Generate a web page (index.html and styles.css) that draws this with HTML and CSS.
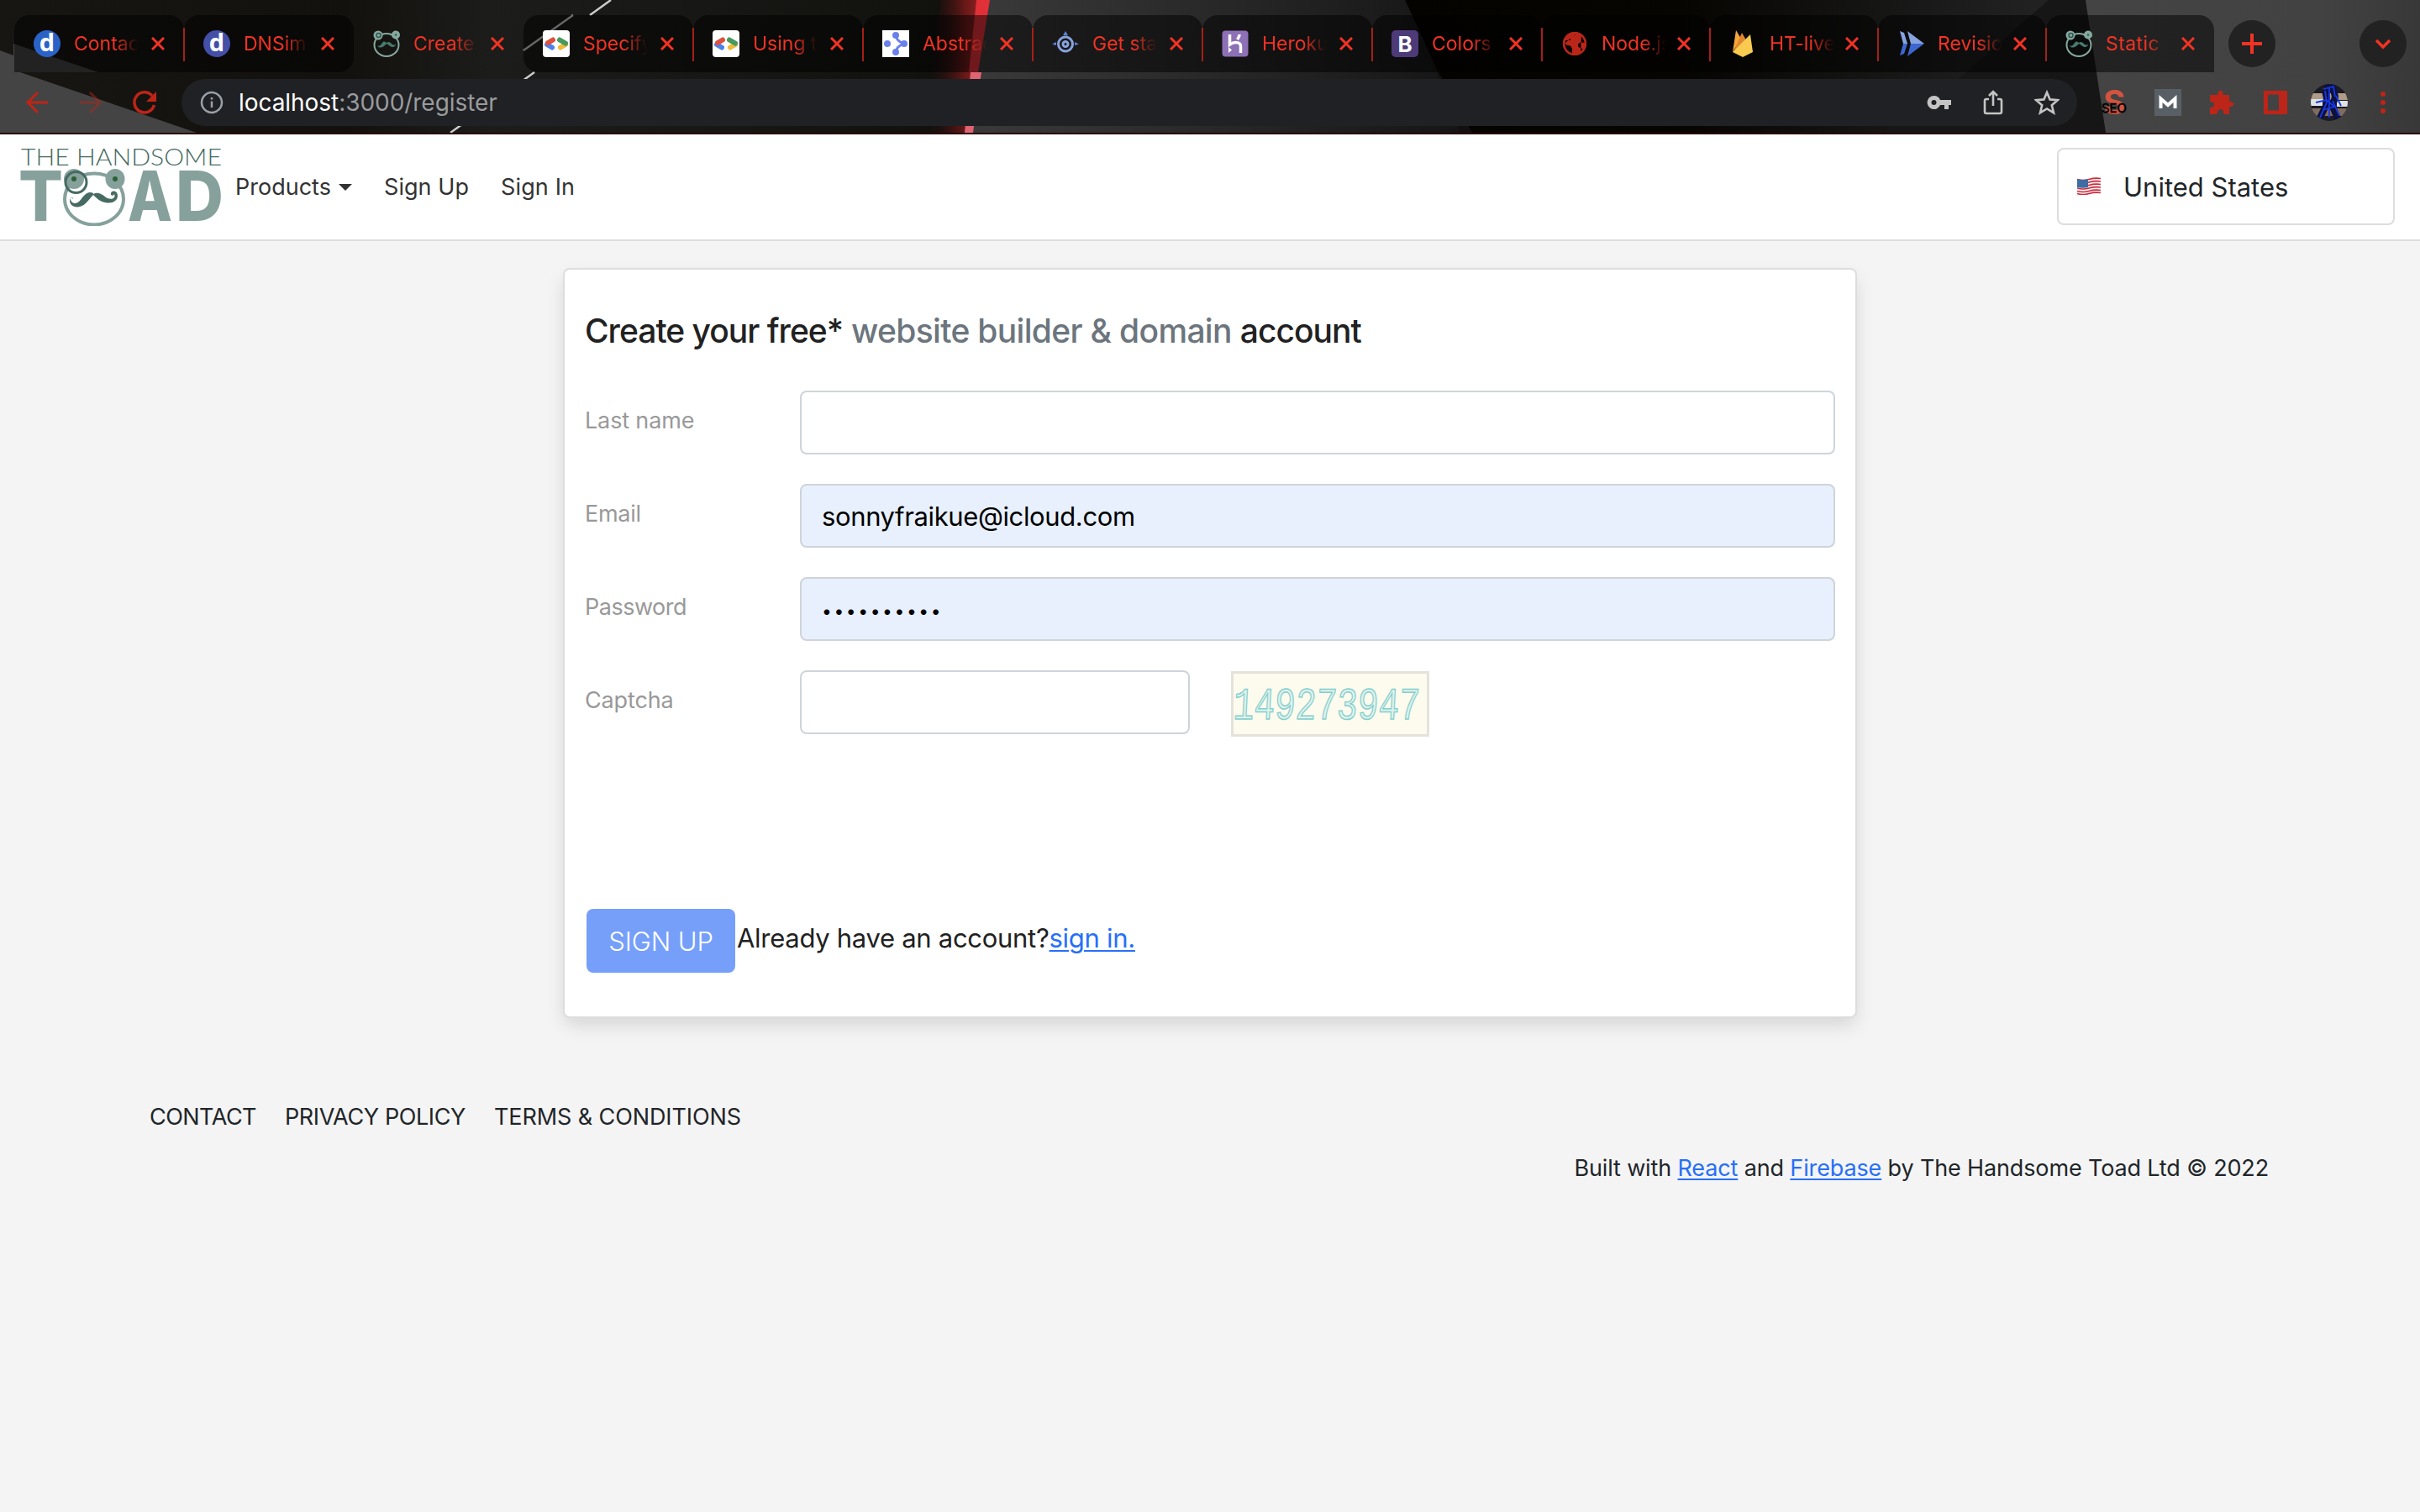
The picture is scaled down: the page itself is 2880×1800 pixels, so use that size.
FILE: index.html
```html
<!DOCTYPE html>
<html lang="en">
<head>
<meta charset="utf-8">
<title>Create account</title>
<link rel="stylesheet" href="styles.css">
</head>
<body>
<svg class="defs" width="0" height="0" aria-hidden="true">
  <defs>
    <symbol id="toad" viewBox="0 0 76 68">
      <ellipse cx="38" cy="36" rx="35" ry="30.5" fill="none" stroke="#86a19b" stroke-width="4"/>
      <ellipse cx="14" cy="12" rx="12" ry="12" fill="#86a19b"/>
      <ellipse cx="63" cy="12" rx="11.5" ry="12" fill="#86a19b"/>
      <circle cx="16.500" cy="16" r="12.500" fill="none" stroke="#466b62" stroke-width="3"/>
      <circle cx="14" cy="12" r="3" fill="#2c6138"/><circle cx="63" cy="12" r="3" fill="#2c6138"/>
      <path d="M37 29C30 25 25 33 21 38c-4 4-9 4-11-1-1-3 3-4 3-1C10 32 7 38 11 43c4 4 12 3 17-2 4-4 7-8 9-10 4 4 8 8 14 9 9 2 15-2 15-8 0-6-7-7-8-3-1 3 3 4 4 1 2 5-3 7-8 5-5-3-10-9-17-5z" fill="#466b62"/>
    </symbol>
    <symbol id="face" viewBox="0 0 32 32">
      <ellipse cx="16" cy="17.500" rx="14.500" ry="13.500" fill="none" stroke="#86a89f" stroke-width="2"/>
      <circle cx="6" cy="6" r="5.500" fill="#86a89f"/><circle cx="27" cy="5.500" r="5" fill="#86a89f"/>
      <circle cx="6.500" cy="6" r="2.500" fill="none" stroke="#2f574e" stroke-width="1.500"/><circle cx="27" cy="5.500" r="1.200" fill="#2f574e"/>
      <path d="M5 18c2 2 4 0 6-3s4-1 5 0c2-2 4-1 6 1s4 2 5 0c0 5-5 5-8 2l-3-2c-3 4-9 7-11 2z" fill="#477a6e"/>
    </symbol>
    <symbol id="x" viewBox="0 0 16 16"><path d="M1 1l14 14M15 1L1 15" stroke="#f23324" stroke-width="3"/></symbol>
    <symbol id="gdev" viewBox="0 0 32 32"><rect width="32" height="32" rx="4" fill="#fff"/><g stroke-width="6" stroke-linecap="round"><path d="M5 17l6 3.500" stroke="#4a80ed"/><path d="M6 15l6-3.500" stroke="#dc5040"/><path d="M27 17l-6 3.500" stroke="#f2b93a"/><path d="M20 11.500l7 4" stroke="#459a5c"/></g></symbol>
  </defs>
</svg>

<header class="browser">
  <svg class="theme" viewBox="0 0 2880 158" preserveAspectRatio="none" aria-hidden="true">
    <defs>
      <linearGradient id="g1"><stop offset="0" stop-color="#3a3a3a"/><stop offset=".5" stop-color="#282828"/><stop offset="1" stop-color="#151515"/></linearGradient>
      <linearGradient id="g2"><stop offset="0" stop-color="#0f0e0a" stop-opacity="0"/><stop offset=".75" stop-color="#6a1818"/><stop offset="1" stop-color="#8a2020"/></linearGradient>
      <linearGradient id="g3"><stop offset="0" stop-color="#040300"/><stop offset=".4" stop-color="#060502"/><stop offset=".8" stop-color="#1c1c1c"/><stop offset="1" stop-color="#262626"/></linearGradient>
      <linearGradient id="g4"><stop offset="0" stop-color="#444"/><stop offset=".7" stop-color="#424242"/><stop offset="1" stop-color="#383838"/></linearGradient>
      <linearGradient id="g5"><stop offset="0" stop-color="#171612"/><stop offset=".35" stop-color="#12110e"/><stop offset=".5" stop-color="#1c1c1a"/><stop offset="1" stop-color="#10100d"/></linearGradient>
    </defs>
    <rect width="1170" height="158" fill="url(#g5)"/>
    <path d="M0 60L16 66V52L117 86H24L234 158H0z" fill="#444"/>
    <path d="M1170 0H1676L1738 158H1153z" fill="url(#g1)"/>
    <path d="M1672 0H2500V158H1752L1712 86z" fill="url(#g3)"/>
    <path d="M2438 0H2482L2506 158H2250L2340 86z" fill="#161616"/>
    <path d="M2482 0H2880V158H2506z" fill="url(#g4)"/>
    <path d="M1120 0H1165L1152 158H1100z" fill="url(#g2)"/>
    <path d="M1162 0H1178L1164 86H1153z" fill="#e03038"/>
    <path d="M1155 86H1168L1158 158H1148z" fill="#e06472"/>
    <path d="M727 0L702 18M682 18L623 60M636 86L536 158" stroke="#ccc" stroke-width="2.500" fill="none"/>
  </svg>
  <div class="tabs">
    <div class="tab"><svg class="fav" viewBox="0 0 32 32"><circle cx="16" cy="16" r="16" fill="#2a62c8"/><text x="16" y="25" class="dn">d</text></svg><span class="tt">Contact</span><svg class="x"><use href="#x"/></svg></div>
    <div class="tab nosep"><svg class="fav" viewBox="0 0 32 32"><circle cx="16" cy="16" r="16" fill="#444fa8"/><text x="16" y="25" class="dn">d</text></svg><span class="tt">DNSimple</span><svg class="x"><use href="#x"/></svg></div>
    <div class="tab on nosep"><svg class="fav"><use href="#face"/></svg><span class="tt">Create</span><svg class="x"><use href="#x"/></svg></div>
    <div class="tab"><svg class="fav"><use href="#gdev"/></svg><span class="tt">Specify</span><svg class="x"><use href="#x"/></svg></div>
    <div class="tab"><svg class="fav"><use href="#gdev"/></svg><span class="tt">Using t</span><svg class="x"><use href="#x"/></svg></div>
    <div class="tab"><svg class="fav" viewBox="0 0 32 32"><path fill="#fff" d="M0 0h32v32H0z"/><g fill="#6b80ea"><circle cx="6" cy="16" r="4"/><circle cx="16" cy="6" r="4"/><circle cx="16" cy="26" r="4"/><circle cx="26" cy="16" r="4"/></g><path d="M16 6c1 5 3 7 9 10-6 3-8 5-9 10" stroke="#6b80ea" stroke-width="3" fill="none"/></svg><span class="tt">Abstract</span><svg class="x"><use href="#x"/></svg></div>
    <div class="tab"><svg class="fav" viewBox="0 0 32 32"><g fill="none" stroke="#87a3dd"><circle cx="16" cy="16.500" r="8.500" stroke-width="3"/><circle cx="16" cy="16.500" r="3" stroke-width="3"/></g><path d="M16 1l3 5h-6zM0 16.500l5-2.500v4zM32 16.500l-5-2.500v4z" fill="#5c83d8"/></svg><span class="tt">Get started</span><svg class="x"><use href="#x"/></svg></div>
    <div class="tab"><svg class="fav" viewBox="0 0 32 32"><rect x=".5" y=".5" width="31" height="31" rx="4" fill="#8d70b5"/><path d="M9.500 5v12c4-3 13-4 13 2v8M21 5c0 3-1 4-2.500 6" stroke="#fff" stroke-width="3.500" fill="none"/><path d="M8 20l4 3.500L8 27z" fill="#fff"/></svg><span class="tt">Heroku</span><svg class="x"><use href="#x"/></svg></div>
    <div class="tab"><svg class="fav" viewBox="0 0 32 32"><rect width="32" height="32" rx="5" fill="#4d3a78"/><text x="16" y="25.500" class="bs">B</text></svg><span class="tt">Colors</span><svg class="x"><use href="#x"/></svg></div>
    <div class="tab n"><svg class="fav" viewBox="0 0 32 32"><circle cx="16" cy="16" r="14" fill="#bb2619"/><path d="M17 4c-1 4-7 3-6 8H5c-1 4 1 6 4 6 3 0 3 3 4 4v7C7 27 4 22 4 16M24 5c3 3 4 7 4 10-4-1-8-1-8 3s4 2 5 4-1 4-2 5" fill="#080505"/><path d="M6 10c4-2 7 1 9-3l2-4C11 3 7 6 6 10z" fill="#bb2619"/><circle cx="16" cy="16" r="12.800" fill="none" stroke="#bb2619" stroke-width="2.500"/></svg><span class="tt">Node.js</span><svg class="x"><use href="#x"/></svg></div>
    <div class="tab n"><svg class="fav" viewBox="0 0 32 32"><path d="M4 26L8 0l6 10z" fill="#f3a73b"/><path d="M5 26L15 3l7 12z" fill="#e1862f"/><path d="M4 26L25 5l3 21-12 6z" fill="#f8ca4f"/></svg><span class="tt">HT-live</span><svg class="x"><use href="#x"/></svg></div>
    <div class="tab n"><svg class="fav" viewBox="0 0 32 32"><path d="M3 1l5 2 4 13H7zM12 1l20 15H16z" fill="#87a3e0"/><path d="M7 16h5L8 28l-5 2zM16 16h16L12 31z" fill="#3d66cf"/></svg><span class="tt">Revisions</span><svg class="x"><use href="#x"/></svg></div>
    <div class="tab n nosep"><svg class="fav"><use href="#face"/></svg><span class="tt wide">Static</span><svg class="x"><use href="#x"/></svg></div>
    <svg class="round plus" viewBox="0 0 56 56"><circle cx="28" cy="28" r="28" fill="#222"/><path d="M16 28h24M28 16v24" stroke="#f23324" stroke-width="4"/></svg>
    <svg class="round down" viewBox="0 0 56 56"><circle cx="28" cy="28" r="28" fill="#222"/><path d="M20 24l8 8 8-8" stroke="#f23324" stroke-width="3.500" fill="none"/></svg>
  </div>
  <div class="toolbar">
    <svg class="nav" viewBox="0 0 32 32"><path d="M29 16H5M17 4L5 16l12 12" stroke="#bd2518" stroke-width="3" fill="none"/></svg>
    <svg class="nav dim" viewBox="0 0 32 32"><path d="M3 16h24M15 4l12 12-12 12" stroke="#bd2518" stroke-width="3" fill="none"/></svg>
    <svg class="nav" viewBox="0 0 32 32"><path d="M25 8A12 12 0 1 0 27.500 19" stroke="#bd2518" stroke-width="3.500" fill="none"/><path d="M30 3v12H18z" fill="#bd2518"/></svg>
    <div class="omni">
      <svg class="info" viewBox="0 0 28 28"><circle cx="14" cy="14" r="12" fill="none" stroke="#9aa0a6" stroke-width="2.500"/><path d="M14 12.500V20M14 8v2.500" stroke="#9aa0a6" stroke-width="2.500"/></svg>
      <span class="url">localhost<span class="rest">:3000/register</span></span>
      <svg class="oi key" viewBox="0 0 30 30"><path d="M8.500 7a8 8 0 1 0 7.500 11h5v5h5v-5h3v-6H16A8 8 0 0 0 8.500 7zm0 5a3 3 0 1 1 0 6 3 3 0 0 1 0-6z" fill="#c4c4c4"/></svg>
      <svg class="oi" viewBox="0 0 30 30"><path d="M10 11H7a2 2 0 0 0-2 2v13a2 2 0 0 0 2 2h16a2 2 0 0 0 2-2V13a2 2 0 0 0-2-2h-3M15 19V2M10 7l5-5 5 5" fill="none" stroke="#c4c4c4" stroke-width="2.600"/></svg>
      <svg class="oi" viewBox="0 0 30 30"><path d="M15 3l3.600 8.400 9.200.8-7 6 2.200 9L15 22.400 7 27.200l2.200-9-7-6 9.200-.8z" fill="none" stroke="#c4c4c4" stroke-width="2.600"/></svg>
    </div>
    <div class="ext">
      <svg class="seo-i" viewBox="0 0 32 32"><text x="16" y="30" class="seo-s">S</text><text x="16" y="28" class="seo">SEO</text></svg>
      <svg viewBox="0 0 32 32"><path fill="#596065" d="M0 0h32v32H0z"/><path d="M7.500 23V11.500L16 19l8.500-7.500V23" fill="none" stroke="#fff" stroke-width="4"/></svg>
      <svg viewBox="0 0 32 32"><path d="M4 7h7.500C10.500 0 18.500 0 17.500 7H25v8c7-1 7 7 0 6v9h-6.500c0-8-8-8-8 0H2v-8c7 0 7-7 0-7V7z" fill="#bd2518"/></svg>
      <svg viewBox="0 0 32 32"><path d="M2 2h28v28H2zM7 6.500v19h13v-19z" fill="#bd2518" fill-rule="evenodd"/></svg>
      <svg class="avatar" viewBox="0 0 44 44"><clipPath id="c"><circle cx="22" cy="22" r="22"/></clipPath><g clip-path="url(#c)"><path fill="#1c1a24" d="M0 0h44v44H0z"/><path fill="#b09c86" d="M0 11h44v8H0z"/><path fill="#dfe3e3" d="M0 18h14v8H0zM31 20h13v7H31z"/><path fill="#7f6c5e" d="M0 29h44v9H0z"/><path d="M17 5l9-2 3 12-3 12 6 14M17 8l3 14-9 18" stroke="#0b1240" stroke-width="8" fill="none"/><path d="M15 6l12-3 2 12M17 8l2 14-8 18M22 4v36M26 20l8 18M6 22l13-3 9 8-14 4M30 14l6 12" stroke="#1838e8" stroke-width="1.800" fill="none"/></g></svg>
      <svg class="dots" viewBox="0 0 6 26"><g fill="#bd2518"><circle cx="3" cy="3" r="3"/><circle cx="3" cy="13" r="3"/><circle cx="3" cy="23" r="3"/></g></svg>
    </div>
  </div>
</header>

<nav class="navbar">
  <svg class="logo" viewBox="0 0 240 92">
    <text x="1" y="20.500" class="lt" textLength="239" lengthAdjust="spacingAndGlyphs">THE HANDSOME</text>
    <text x="-2" y="87" class="lb" textLength="53" lengthAdjust="spacingAndGlyphs">T</text>
    <use href="#toad" x="50" y="25" width="76" height="68"/>
    <text x="128" y="87" class="lb" textLength="53" lengthAdjust="spacingAndGlyphs">A</text>
    <text x="185" y="87" class="lb" textLength="57" lengthAdjust="spacingAndGlyphs">D</text>
  </svg>
  <a class="nl n1">Products<span class="caret"></span></a>
  <a class="nl n2">Sign Up</a>
  <a class="nl n3">Sign In</a>
  <div class="country">
    <svg class="flag" viewBox="0 0 28 21"><path d="M0 2q7 2 14 0t14-1v18q-7-1-14 1t-14 0z" fill="#f2f2f2"/><path d="M0 2.500q7 2 14 0t14-1M0 6q7 2 14 0t14-1M0 9.500q7 2 14 0t14-1M0 13q7 2 14 0t14-1M0 16.500q7 2 14 0t14-1M0 19.500q7 2 14 0t14-1" stroke="#cf2b3c" stroke-width="1.600" fill="none"/><path d="M0 2q7 2 13 0v10q-6 1.500-13 0z" fill="#3f6ca3"/></svg>
    <span>United States</span>
  </div>
</nav>

<main class="page">
  <form class="card">
    <h1><span>Create your free*</span><span class="muted">website builder &amp; domain</span><span>account</span></h1>
    <div class="row"><label>Last name</label><input type="text"></div>
    <div class="row"><label class="l-email">Email</label><input class="auto" type="text" value="sonnyfraikue@icloud.com"></div>
    <div class="row"><label class="l-pass">Password</label><input class="auto pw" type="text" value="••••••••••"></div>
    <div class="row"><label>Captcha</label><input class="short" type="text">
      <svg class="captcha" viewBox="0 0 236 78"><rect x="1.500" y="1.500" width="233" height="75" fill="#fdfaee" stroke="#e4e2da" stroke-width="3"/><text x="5" y="57" textLength="222" lengthAdjust="spacingAndGlyphs" transform="skewX(-3)">149273947</text></svg>
    </div>
    <div class="actions"><button type="button">SIGN UP</button><p class="have">Already have an account?<a>sign in.</a></p></div>
  </form>
</main>

<footer>
  <div class="links"><a class="f1">CONTACT</a><a class="f2">PRIVACY POLICY</a><a class="f3">TERMS &amp; CONDITIONS</a></div>
  <p class="built">Built with <a>React</a> and <a>Firebase</a> by The Handsome Toad Ltd © 2022</p>
</footer>
</body>
</html>
```
FILE: styles.css
```css
* { box-sizing: border-box; }
body { margin: 0; width: 2880px; height: 1800px; overflow: hidden; background: #f4f4f4; color: #212529; font-family: Inter, "Liberation Sans", sans-serif; }
svg { display: block; flex: none; }
.defs { position: absolute; }

.browser { position: relative; height: 160px; border-bottom: 2px solid #2a0003; background: #12110f; }
.theme { position: absolute; inset: 0; width: 2880px; height: 158px; }
.tabs { position: relative; display: flex; align-items: center; height: 86px; padding: 18px 16px 0 17px; }
.tab { position: relative; display: flex; align-items: center; width: 202px; height: 68px; padding-left: 23px; border-radius: 18px 18px 0 0; background: rgba(0,0,0,.5); flex: none; }
.tab.n { width: 200px; }
.tab.on { background: none; }
.tab:not(.nosep)::after { content: ""; position: absolute; right: -1px; top: 15px; width: 2px; height: 40px; background: #a52015; z-index: 1; }
.tab:nth-child(2) { border-bottom-right-radius: 18px; }
.tab:nth-child(4) { border-bottom-left-radius: 18px; }
.fav { width: 32px; height: 32px; }
.tt { width: 78px; margin-left: 16px; overflow: hidden; white-space: nowrap; font-size: 23px; line-height: 32px; color: #f23324; -webkit-mask-image: linear-gradient(90deg, #000 62%, transparent 98%); mask-image: linear-gradient(90deg, #000 62%, transparent 98%); }
.tt.wide { letter-spacing: .4px; }
.x { width: 16px; height: 16px; margin: 0 23px 0 auto; }
.round { width: 56px; height: 56px; margin-top: -1px; }
.plus { margin-left: 17px; }
.down { margin-left: auto; }
.dn { font: bold 29px "Open Sans", sans-serif; fill: #fff; text-anchor: middle; }
.bs { font: bold 26px Inter, sans-serif; fill: #fff; text-anchor: middle; }

.toolbar { position: relative; display: flex; align-items: center; height: 72px; padding-left: 28px; }
.nav { width: 32px; height: 32px; margin-right: 32px; }
.nav.dim { opacity: .45; }
.nav:nth-child(3) { margin-right: 28px; }
.omni { display: flex; align-items: center; width: 2256px; height: 56px; padding: 0 21px 0 22px; border-radius: 28px; background: #202124; }
.info { width: 28px; height: 28px; margin-right: 18px; }
.url { margin-right: auto; font-size: 28px; letter-spacing: -.05px; color: #fff; }
.rest { color: #9a9b9d; }
.oi { width: 30px; height: 30px; margin-left: 34px; }
.ext { display: flex; align-items: center; margin-left: 28px; }
.ext svg { width: 32px; height: 32px; margin-right: 32px; }
.ext svg.avatar { width: 44px; height: 44px; margin: 0 39px 0 -6px; }
.ext svg.dots { width: 6px; height: 26px; margin: 0; }
.ext svg.seo-i { overflow: visible; }
.seo-s { font: bold 40px Inter, sans-serif; fill: #d35340; text-anchor: middle; }
.seo { font: 15px Inter, sans-serif; fill: #000; stroke: #000; stroke-width: .5px; text-anchor: middle; }

.navbar { display: flex; align-items: center; height: 127px; padding: 0 30px 2px 24px; background: #fff; border-bottom: 2px solid #ddd; font-size: 27px; color: #333; }
.logo { width: 240px; height: 92px; overflow: visible; }
.lt { font: 300 27px Lato, sans-serif; fill: #466b62; }
.lb { font: 800 82px Inter, sans-serif; fill: #86a19b; }
.nl { display: flex; align-items: center; padding-top: 2px; white-space: nowrap; }
.n1 { margin-left: 16px; width: 177px; }
.n2 { width: 139px; letter-spacing: .06px; }
.n3 { letter-spacing: .15px; }
.caret { margin-left: 9px; border: 8px solid transparent; border-top-color: #333; border-bottom: 0; }
.country { display: flex; align-items: center; width: 402px; height: 92px; margin-left: auto; padding-left: 22px; border: 2px solid #ddd; border-radius: 8px; font-size: 31px; color: #212529; }
.country span { padding-top: 1px; }
.flag { width: 28px; height: 21px; margin-right: 27px; }

.page { padding-top: 32px; }
.card { width: 1540px; height: 893px; margin: 0 auto; padding: 50px 24px 0; background: #fff; border: 2px solid #ddd; border-radius: 8px; box-shadow: 0 10px 22px -2px rgba(0,0,0,.13); }
h1 { display: flex; gap: 10px; margin: 0 0 48px; font-size: 39px; line-height: 46px; font-weight: 500; letter-spacing: -1px; white-space: nowrap; color: #212121; }
.muted { letter-spacing: -.68px; color: #6c757d; }
.row { display: flex; align-items: center; height: 76px; margin-bottom: 35px; }
label { width: 256px; padding-bottom: 6px; font-size: 27px; letter-spacing: -.15px; color: #999; }
.l-email { letter-spacing: -.3px; }
.l-pass { letter-spacing: -.5px; }
input { flex: 1; min-width: 0; height: 76px; padding: 0 24px; border: 2px solid #ced4da; border-radius: 8px; background: #fff; font: 31px Inter, sans-serif; letter-spacing: -.38px; color: #000; }
input.auto { background: #e8f0fe; }
input.pw { padding-top: 4px; font-size: 21px; letter-spacing: 2.6px; }
input.short { flex: none; width: 464px; }
.captcha { width: 236px; height: 78px; margin: 3px 0 0 49px; }
.captcha text { font: 54px "Liberation Mono", monospace; fill: #dff2ea; stroke: #82cfcf; stroke-width: 1.5px; }
.actions { display: flex; margin-top: 208px; padding-left: 2px; }
button { width: 177px; height: 76px; padding: 0; border: 0; border-radius: 8px; background: #769ffa; color: #fff; font: 300 31px Inter, sans-serif; letter-spacing: -.1px; }
.have { margin: 14px 0 0 2px; font-size: 31px; line-height: 42px; letter-spacing: -.29px; white-space: nowrap; color: #212121; }
a { color: inherit; }
.have a, .built a { color: #266ffa; text-decoration: underline; text-decoration-thickness: 2px; text-underline-offset: 3px; }

footer { padding: 101px 180px 0 178px; font-size: 27px; line-height: 34px; }
.links { display: flex; gap: 34px; }
.f1 { letter-spacing: -.53px; }
.f2 { letter-spacing: -.39px; }
.f3 { letter-spacing: -.1px; }
.built { margin: 27px 0 0; text-align: right; letter-spacing: -.14px; }
```
